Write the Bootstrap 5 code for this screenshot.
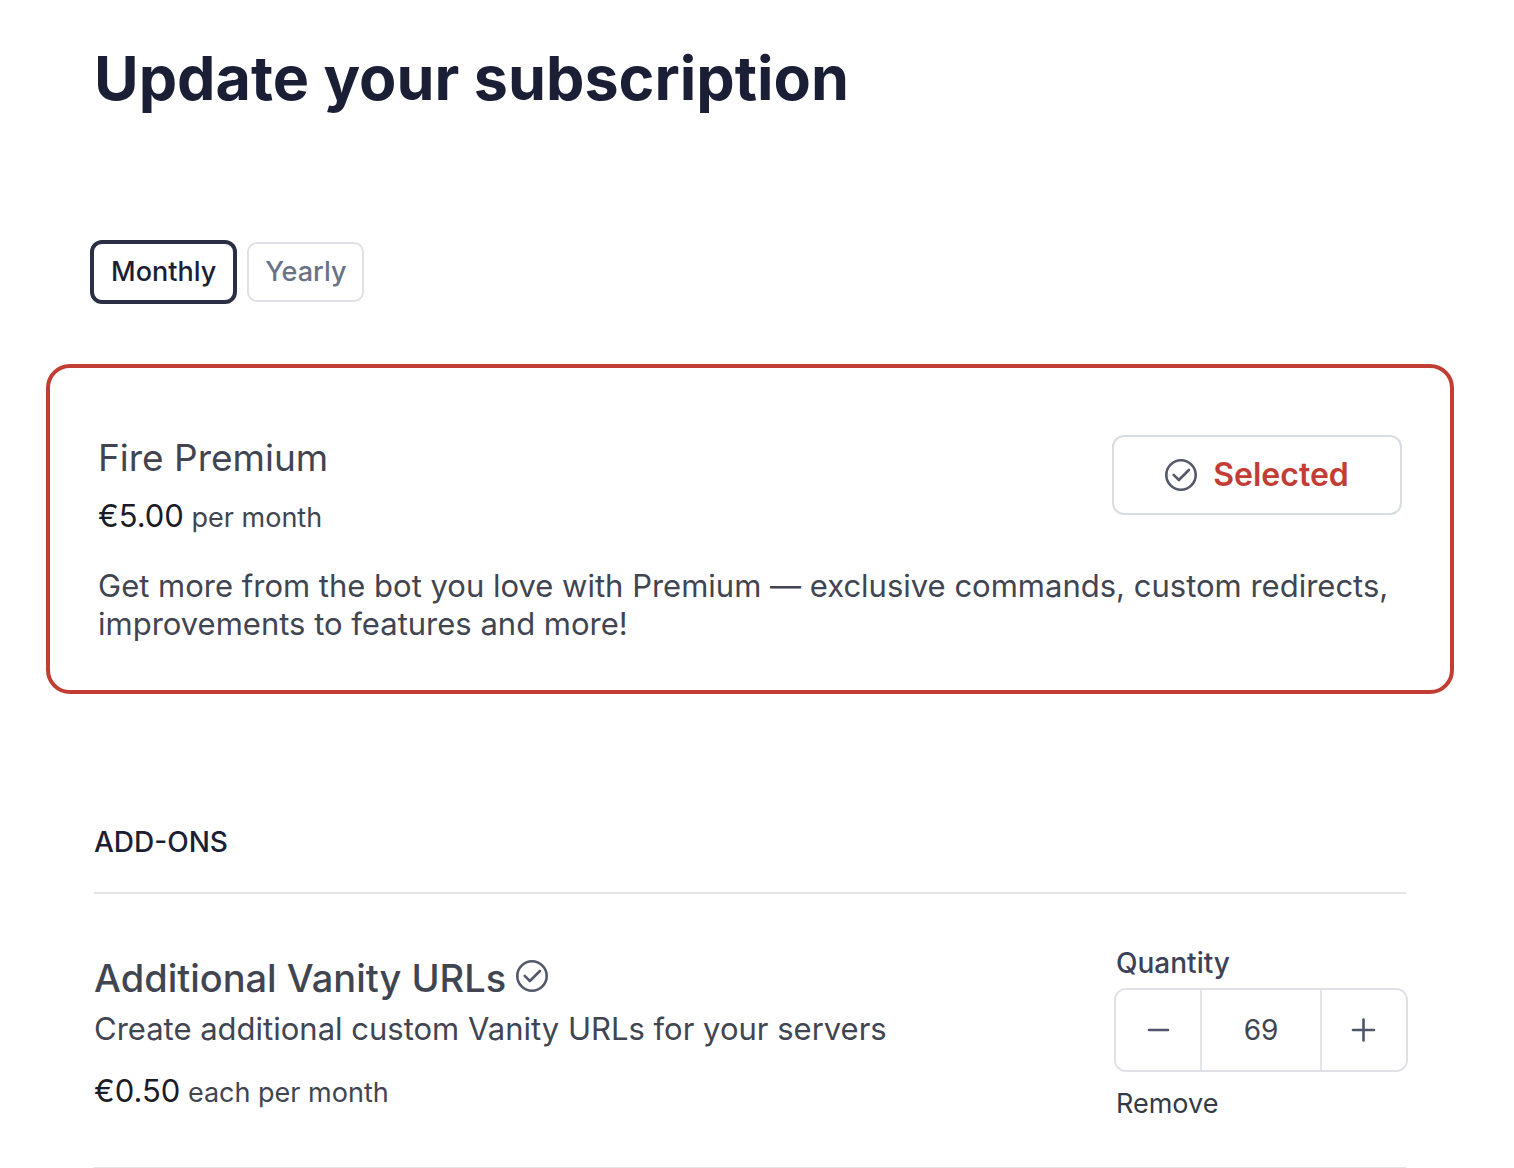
<!DOCTYPE html>
<html lang="en">
<head>
<meta charset="utf-8">
<meta name="viewport" content="width=device-width, initial-scale=1">
<title>Update your subscription</title>
<link href="https://cdn.jsdelivr.net/npm/bootstrap@5.3.0/dist/css/bootstrap.min.css" rel="stylesheet">
<style>
body{font-family:Inter,"Liberation Sans",sans-serif;color:#414552;background:#fff;font-size:27px;line-height:36px}
.page{padding:40px 108px 0 94px}
.page-title{font-size:61px;line-height:76px;font-weight:700;color:#1a1f36;margin-bottom:124px}
.intervals{margin-left:-4px;gap:10px;margin-bottom:60px}
.interval{height:60px;padding:0 16px;border:2px solid #e0e1e7;border-radius:10px;background:#fff;font-size:27px;font-weight:500;color:#697386}
.interval.chosen{height:64px;padding:0 17px;border:4px solid #2a2f45;border-radius:12px;color:#1a1f36}
.plan{margin:0 -48px;border:4px solid #c23d34;border-radius:24px;padding:67px 48px 47px}
.plan-name{font-size:37px;line-height:46px;font-weight:400;margin:0 0 15px}
.price-line{line-height:40px;color:#414552}
.price{font-size:31px;color:#1a1b25}
.body-text{font-size:31px;line-height:38px;margin:0}
.plan-text{margin-top:29px}
.selected-btn{width:290px;height:80px;gap:16px;border:2px solid #d8dde1;border-radius:12px;background:#fff;color:#c23d34;font-size:32px;font-weight:600}
.check{width:32px;height:32px;flex:none;fill:none;stroke:#545969;stroke-width:2.6;stroke-linecap:round;stroke-linejoin:round}
.addons-title{font-size:28px;line-height:36px;font-weight:500;color:#1a1f36;margin:130px 0 32px}
.addon{border:solid #e3e4e8;border-width:2px 0;padding:51px 0 45px}
.addon-info{padding-top:9px}
.addon-name{font-size:38px;line-height:48px;font-weight:500;margin:0 0 8px;gap:10px;color:#414552}
.addon-name .check{margin-top:6px}
.addon-info .price-line{margin-top:23px}
.quantity{width:294px;margin-right:-2px;flex:none}
.quantity-label{font-size:28px;font-weight:500;color:#3c4257;padding-left:2px;margin-bottom:7px}
.stepper{height:84px;border:2px solid #e0e1e7;border-radius:12px;overflow:hidden}
.stepper button{width:84px;border:0;padding:0;background:#fff}
.stepper svg{width:26px;height:26px;display:block;margin:auto;fill:none;stroke:#4f566b;stroke-width:2.6;stroke-linecap:round}
.stepper input{flex:1;min-width:0;border:solid #e3e6ea;border-width:0 2px;text-align:center;color:#414552;font-size:28px}
.remove-btn{margin-top:14px;padding:0 2px;border:0;background:none;color:#353a44;line-height:36px}
</style>
</head>
<body>
<main class="page">
  <h1 class="page-title">Update your subscription</h1>
  <div class="intervals d-flex align-items-center" role="group" aria-label="Billing interval">
    <button class="interval chosen" type="button" aria-pressed="true">Monthly</button>
    <button class="interval" type="button" aria-pressed="false">Yearly</button>
  </div>
  <section class="plan">
    <div class="d-flex justify-content-between align-items-start">
      <div>
        <h2 class="plan-name">Fire Premium</h2>
        <div class="price-line"><span class="price">€5.00</span> per month</div>
      </div>
      <button type="button" class="selected-btn d-flex align-items-center justify-content-center">
        <svg class="check" viewBox="0 0 32 32" aria-hidden="true"><circle cx="16" cy="16" r="14.7"/><path d="M8.7 15.9l5.2 5.1 10-10"/></svg>
        Selected
      </button>
    </div>
    <p class="body-text plan-text">Get more from the bot you love with Premium — exclusive commands, custom redirects, improvements to features and more!</p>
  </section>
  <h2 class="addons-title">ADD-ONS</h2>
  <section class="addon d-flex justify-content-between align-items-start">
    <div class="addon-info">
      <h3 class="addon-name d-flex">Additional Vanity URLs
        <svg class="check" viewBox="0 0 32 32" aria-hidden="true"><circle cx="16" cy="16" r="14.7"/><path d="M8.7 15.9l5.2 5.1 10-10"/></svg>
      </h3>
      <p class="body-text">Create additional custom Vanity URLs for your servers</p>
      <div class="price-line"><span class="price">€0.50</span> each per month</div>
    </div>
    <div class="quantity">
      <label class="quantity-label d-block" for="quantity">Quantity</label>
      <div class="stepper d-flex">
        <button type="button" aria-label="Decrease quantity"><svg viewBox="0 0 26 26"><path d="M4 13h19"/></svg></button>
        <input id="quantity" type="text" inputmode="numeric" value="69">
        <button type="button" aria-label="Increase quantity"><svg viewBox="0 0 26 26"><path d="M2 13h21M12.5 2.5v21"/></svg></button>
      </div>
      <button type="button" class="remove-btn d-block">Remove</button>
    </div>
  </section>
</main>
<script src="https://cdn.jsdelivr.net/npm/bootstrap@5.3.0/dist/js/bootstrap.bundle.min.js"></script>
</body>
</html>
